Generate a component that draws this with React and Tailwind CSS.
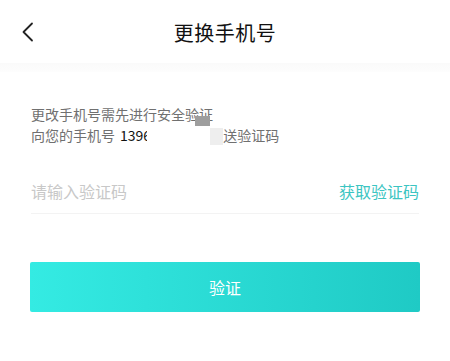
import React from "react";

export default function App() {
  const font = { fontFamily: '"Noto Sans CJK SC", "Noto Sans", sans-serif' };
  return (
    <div className="w-[450px] h-[361px] bg-white overflow-hidden" style={font}>
      {/* header */}
      <div className="h-[63px] grid grid-cols-[1fr_auto_1fr] items-center">
        <div className="pl-[20px] flex items-center">
          <svg width="16" height="22" viewBox="0 0 16 22" fill="none">
            <path d="M12 2.5 L3.5 11 L12 19.5" stroke="#222" strokeWidth="1.8" strokeLinecap="round" strokeLinejoin="round" />
          </svg>
        </div>
        <div className="text-[20px] leading-none text-[#111] tracking-[0.5px] pt-[2px]">更换手机号</div>
        <div />
      </div>
      <div className="h-[9px] bg-gradient-to-b from-[#fafafa] to-[#fdfdfd]" />

      {/* description */}
      <div className="pl-[31px] pt-[32px] text-[14px] leading-[21px] text-[#707070] relative">
        <div>更改手机号需先进行安全验证</div>
        <div className="flex items-center">
          <span>向您的手机号</span>
          <span className="ml-[5px] text-[#111]">139</span>
          <span className="inline-block w-[4px] overflow-hidden text-[#111]">6</span>
          <span className="inline-block w-[63px]" />
          <span className="inline-block w-[13px] h-[17px] bg-[#eeeeee] mt-[1px]" />
          <span>送验证码</span>
        </div>
        <div className="absolute left-[195px] top-[44px] w-[15px] h-[10px] bg-[#9e9e9e]" />
      </div>

      {/* input row */}
      <div className="mx-[31px] mt-[22px] h-[46px] flex items-center justify-between border-b border-[#f3f3f3]">
        <span className="text-[16px] text-[#c8c8c8] pt-[1px]">请输入验证码</span>
        <span className="text-[16px] text-[#3cc5c2] pt-[1px]">获取验证码</span>
      </div>

      {/* button */}
      <div className="px-[30px] mt-[48px]">
        <div className="h-[50px] rounded-[2px] bg-gradient-to-r from-[#34ebe3] to-[#1fcac5] flex items-center justify-center">
          <span className="text-[16px] text-white">验证</span>
        </div>
      </div>
    </div>
  );
}
